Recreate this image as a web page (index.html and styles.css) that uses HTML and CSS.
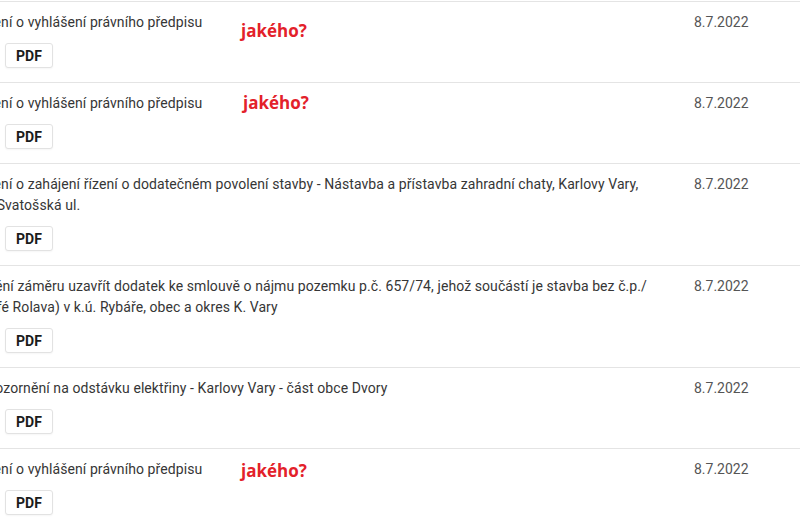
FILE: index.html
```html
<!DOCTYPE html>
<html lang="cs">
<head>
<meta charset="utf-8">
<title>Úřední deska</title>
<link rel="stylesheet" href="styles.css">
</head>
<body>
<div class="viewport">
  <ul class="list">
    <li class="row">
      <div class="desc">
        <p class="title">Oznámení o vyhlášení právního předpisu</p>
        <button class="pdf">PDF</button>
      </div>
      <div class="date">8.7.2022</div>
      <span class="note note-1">jakého?</span>
    </li>
    <li class="row">
      <div class="desc">
        <p class="title">Oznámení o vyhlášení právního předpisu</p>
        <button class="pdf">PDF</button>
      </div>
      <div class="date">8.7.2022</div>
      <span class="note note-2">jakého?</span>
    </li>
    <li class="row">
      <div class="desc">
        <p class="title">Oznámení o zahájení řízení o dodatečném povolení stavby - Nástavba a přístavba zahradní chaty, Karlovy Vary, Doubí - Svatošská ul.</p>
        <button class="pdf">PDF</button>
      </div>
      <div class="date">8.7.2022</div>
    </li>
    <li class="row">
      <div class="desc">
        <p class="title">Zveřejnění záměru uzavřít dodatek ke smlouvě o nájmu pozemku p.č. 657/74, jehož součástí je stavba bez č.p./<wbr>č.e. (Café Rolava) v k.ú. Rybáře, obec a okres K. Vary</p>
        <button class="pdf">PDF</button>
      </div>
      <div class="date">8.7.2022</div>
    </li>
    <li class="row">
      <div class="desc">
        <p class="title">ČEZ Upozornění na odstávku elektřiny - Karlovy Vary - část obce Dvory</p>
        <button class="pdf">PDF</button>
      </div>
      <div class="date">8.7.2022</div>
    </li>
    <li class="row">
      <div class="desc">
        <p class="title">Oznámení o vyhlášení právního předpisu</p>
        <button class="pdf">PDF</button>
      </div>
      <div class="date">8.7.2022</div>
      <span class="note note-3">jakého?</span>
    </li>
  </ul>
</div>
</body>
</html>
```
FILE: styles.css
```css
html, body {
  margin: 0;
  padding: 0;
  background: #fff;
}

body {
  font-family: Roboto, "Liberation Sans", sans-serif;
  font-size: 14px;
  color: #363636;
}

.viewport {
  width: 800px;
  height: 530px;
  overflow: hidden;
  padding-top: 1px;
  box-sizing: border-box;
}

.list {
  list-style: none;
  margin: 0 0 0 -51px;
  padding: 0;
  width: 851px;
}

.row {
  position: relative;
  display: grid;
  grid-template-columns: 706px 1fr;
  column-gap: 39px;
  border-top: 1px solid #e4e4e4;
  padding: 10px 0 14px;
}

.desc {
  display: flex;
  flex-direction: column;
  align-items: flex-start;
  gap: 10px;
}

.title {
  margin: 0;
  line-height: 21px;
  letter-spacing: 0.08px;
}

.pdf {
  margin-left: 56px;
  width: 48px;
  height: 25px;
  padding: 0;
  border: 1px solid #e2e2e2;
  border-radius: 3px;
  background: #fff;
  box-shadow: 0 1px 2px rgba(0, 0, 0, 0.04);
  font-family: Roboto, "Liberation Sans", sans-serif;
  font-size: 14px;
  font-weight: 700;
  color: #1b1b1b;
  display: flex;
  align-items: center;
  justify-content: center;
}

.date {
  line-height: 21px;
  color: #555;
}

.note {
  position: absolute;
  font-family: "Open Sans", sans-serif;
  font-weight: 700;
  font-size: 17px;
  line-height: 20px;
  color: #e3212a;
}

.note-1 { left: 292px; top: 19px; }
.note-2 { left: 294px; top: 10px; }
.note-3 { left: 292px; top: 12px; }
```
